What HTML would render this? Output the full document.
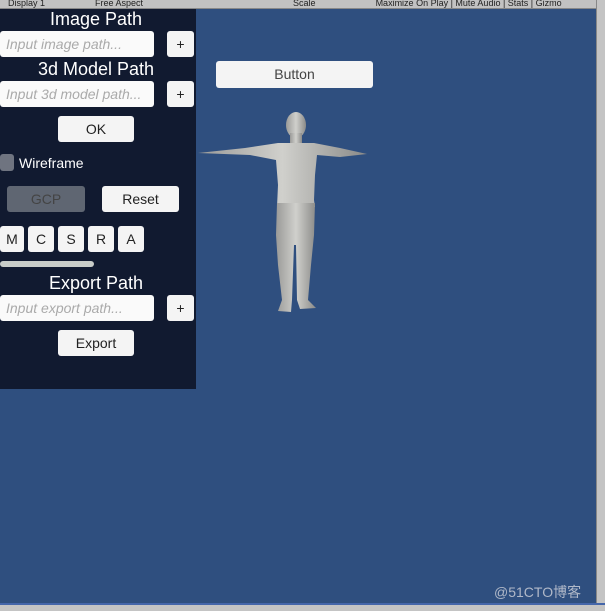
<!DOCTYPE html>
<html><head><style>
*{margin:0;padding:0;box-sizing:border-box}
body{width:605px;height:611px;overflow:hidden;background:#2f4f7f;font-family:"Liberation Sans",sans-serif;position:relative}
.a{position:absolute}
.top{left:0;top:0;width:605px;height:9px;background:#c2c2c2;border-bottom:1px solid #888;font-size:9px;color:#222;line-height:6px;overflow:hidden;white-space:nowrap}
.panel{left:0;top:9px;width:196px;height:380px;background:#111a30}
.lbl{color:#fff;font-size:18px;text-align:center}
.inp{background:#fafafa;border-radius:3px;color:#aaa;font-style:italic;font-size:14px;padding-left:6px;line-height:26px}
.btn{background:#f4f4f4;border-radius:3px;color:#222;font-size:14px;text-align:center}
</style></head><body>
<div class="a top"><span style="margin-left:8px">Display 1</span><span style="margin-left:50px">Free Aspect</span><span style="margin-left:150px">Scale</span><span style="margin-left:60px">Maximize On Play | Mute Audio | Stats | Gizmo</span></div>
<div class="a panel"></div>
<div class="a lbl" style="left:0;top:9px;width:192px;">Image Path</div>
<div class="a inp" style="left:0;top:31px;width:154px;height:26px">Input image path...</div>
<div class="a btn" style="left:167px;top:31px;width:27px;height:26px;line-height:26px">+</div>
<div class="a lbl" style="left:0;top:59px;width:192px;">3d Model Path</div>
<div class="a inp" style="left:0;top:81px;width:154px;height:26px">Input 3d model path...</div>
<div class="a btn" style="left:167px;top:81px;width:27px;height:26px;line-height:26px">+</div>
<div class="a btn" style="left:58px;top:116px;width:76px;height:26px;line-height:26px">OK</div>
<div class="a" style="left:0;top:154px;width:14px;height:17px;background:#6f7480;border-radius:3px"></div>
<div class="a" style="left:19px;top:155px;color:#fff;font-size:14px">Wireframe</div>
<div class="a btn" style="left:7px;top:186px;width:78px;height:26px;line-height:26px;background:#5f6672;color:#444">GCP</div>
<div class="a btn" style="left:102px;top:186px;width:77px;height:26px;line-height:26px">Reset</div>
<div class="a btn" style="left:0;top:226px;width:24px;height:26px;line-height:26px">M</div>
<div class="a btn" style="left:28px;top:226px;width:26px;height:26px;line-height:26px">C</div>
<div class="a btn" style="left:58px;top:226px;width:26px;height:26px;line-height:26px">S</div>
<div class="a btn" style="left:88px;top:226px;width:26px;height:26px;line-height:26px">R</div>
<div class="a btn" style="left:118px;top:226px;width:26px;height:26px;line-height:26px">A</div>
<div class="a" style="left:0;top:261px;width:94px;height:6px;background:#c8ccc8;border-radius:3px"></div>
<div class="a lbl" style="left:0;top:273px;width:192px;">Export Path</div>
<div class="a inp" style="left:0;top:295px;width:154px;height:26px">Input export path...</div>
<div class="a btn" style="left:167px;top:295px;width:27px;height:26px;line-height:26px">+</div>
<div class="a btn" style="left:58px;top:330px;width:76px;height:26px;line-height:26px">Export</div>
<div class="a btn" style="left:216px;top:61px;width:157px;height:27px;line-height:27px;color:#444">Button</div>
<svg class="a" style="left:190px;top:105px" width="190" height="210">
<defs><linearGradient id="g" x1="0" x2="1"><stop offset="0" stop-color="#9a9a98"/><stop offset=".5" stop-color="#d0d0cc"/><stop offset="1" stop-color="#8a8a88"/></linearGradient></defs>
<g fill="url(#g)">
<ellipse cx="106" cy="20" rx="10" ry="13"/>
<rect x="100" y="28" width="12" height="12"/>
<path d="M8 48 L55 43 L88 38 L124 38 L150 43 L177 49 L150 52 L127 50 L125 70 L124 95 L125 102 L87 102 L88 80 L86 55 L60 50 Z"/>
<path d="M87 98 L125 98 L124 130 L121 160 L118 195 L126 203 L110 204 L107 195 L106 140 L104 140 L102 195 L101 207 L88 206 L92 195 L88 160 L86 130 Z"/>
</g></svg>
<div class="a" style="left:596px;top:0;width:9px;height:611px;background:#c4c4c4;border-left:1px solid #888"></div>
<div class="a" style="left:0;top:603px;width:605px;height:8px;background:#c4c4c4;border-top:2px solid #4466aa"></div>
<div class="a" style="left:494px;top:582px;color:#b0b8c8;font-size:14px;font-family:'Liberation Sans','Noto Sans CJK SC',sans-serif">@51CTO博客</div>
</body></html>
